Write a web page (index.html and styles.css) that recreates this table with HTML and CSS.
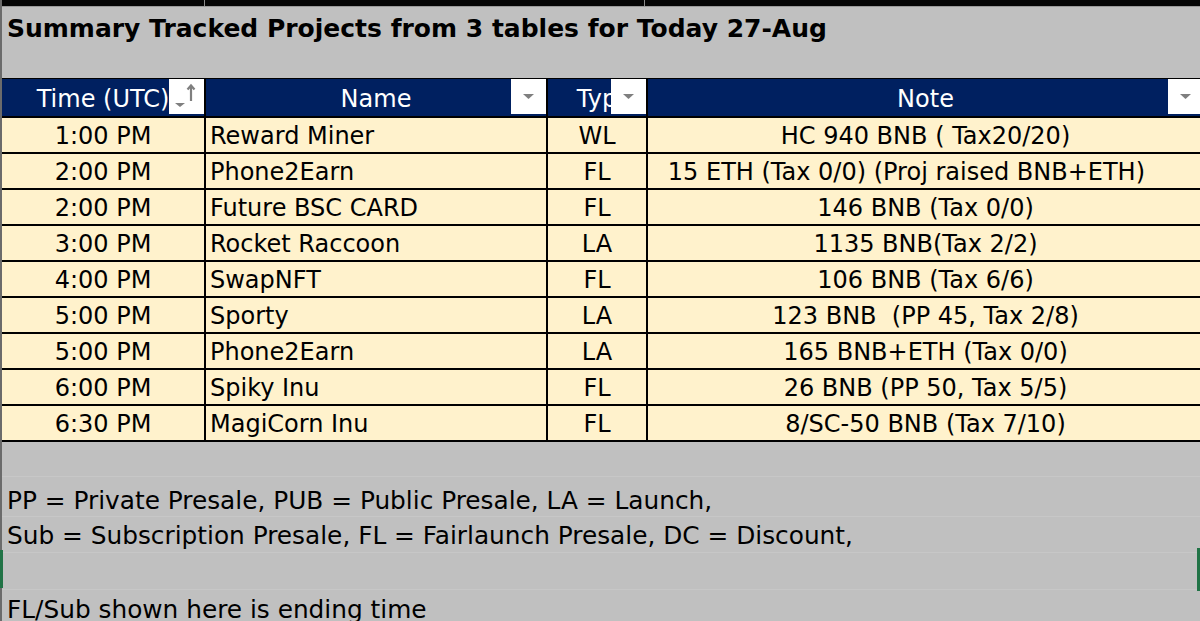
FILE: index.html
```html
<!DOCTYPE html>
<html>
<head>
<meta charset="utf-8">
<link rel="stylesheet" href="styles.css">
</head>
<body>
<div class="frame">
  <div class="topbar"><span class="tb-cell tb-a"></span><span class="tb-cell tb-b"></span><span class="tb-cell tb-c"></span></div>
  <div class="title">Summary Tracked Projects from 3 tables for Today 27-Aug</div>
  <table class="sheet">
    <colgroup>
      <col class="w-time"><col class="w-name"><col class="w-type"><col class="w-note">
    </colgroup>
    <thead>
      <tr>
        <th class="hc">Time (UTC)<span class="filter sort"><svg width="35" height="35" viewBox="0 0 35 35"><path d="M6 24h10l-5 4z" fill="#7f7f7f"/><path d="M22 22V7M18.5 10.5L22 6.5l3.5 4" stroke="#7f7f7f" stroke-width="2.2" fill="none"/></svg></span></th>
        <th class="hc">Name<span class="filter"><svg width="35" height="35" viewBox="0 0 35 35"><path d="M12 15h11l-5.5 5z" fill="#7f7f7f"/></svg></span></th>
        <th class="hc">Typ<span class="filter"><svg width="35" height="35" viewBox="0 0 35 35"><path d="M12 15h11l-5.5 5z" fill="#7f7f7f"/></svg></span></th>
        <th class="hc">Note<span class="filter"><svg width="35" height="35" viewBox="0 0 35 35"><path d="M12 15h11l-5.5 5z" fill="#7f7f7f"/></svg></span></th>
      </tr>
    </thead>
    <tbody>
      <tr><td class="ctr">1:00 PM</td><td>Reward Miner</td><td class="ctr">WL</td><td class="ctr">HC 940 BNB ( Tax20/20)</td></tr>
      <tr><td class="ctr">2:00 PM</td><td>Phone2Earn</td><td class="ctr">FL</td><td class="ctr">15 ETH (Tax 0/0) (Proj raised BNB+ETH)&nbsp;&nbsp;&nbsp;&nbsp;&nbsp;</td></tr>
      <tr><td class="ctr">2:00 PM</td><td>Future BSC CARD</td><td class="ctr">FL</td><td class="ctr">146 BNB (Tax 0/0)</td></tr>
      <tr><td class="ctr">3:00 PM</td><td>Rocket Raccoon</td><td class="ctr">LA</td><td class="ctr">1135 BNB(Tax 2/2)</td></tr>
      <tr><td class="ctr">4:00 PM</td><td>SwapNFT</td><td class="ctr">FL</td><td class="ctr">106 BNB (Tax 6/6)</td></tr>
      <tr><td class="ctr">5:00 PM</td><td>Sporty</td><td class="ctr">LA</td><td class="ctr">123 BNB&nbsp; (PP 45, Tax 2/8)</td></tr>
      <tr><td class="ctr">5:00 PM</td><td>Phone2Earn</td><td class="ctr">LA</td><td class="ctr">165 BNB+ETH (Tax 0/0)</td></tr>
      <tr><td class="ctr">6:00 PM</td><td>Spiky Inu</td><td class="ctr">FL</td><td class="ctr">26 BNB (PP 50, Tax 5/5)</td></tr>
      <tr><td class="ctr">6:30 PM</td><td>MagiCorn Inu</td><td class="ctr">FL</td><td class="ctr">8/SC-50 BNB (Tax 7/10)</td></tr>
    </tbody>
  </table>
  <div class="notes">
    <div class="nrow r-empty"></div>
    <div class="nrow r-pp">PP = Private Presale, PUB = Public Presale, LA = Launch,</div>
    <div class="nrow r-sub">Sub = Subscription Presale, FL = Fairlaunch Presale, DC = Discount,</div>
    <div class="nrow r-empty2"></div>
    <div class="nrow r-fl">FL/Sub shown here is ending time</div>
  </div>
  <span class="sel sel-left"></span>
  <span class="sel sel-right"></span>
</div>
</body>
</html>
```
FILE: styles.css
```css
* { box-sizing: border-box; }
html, body { margin: 0; padding: 0; }
body {
  width: 1200px;
  height: 621px;
  overflow: hidden;
  background: #c0c0c0;
  font-family: "DejaVu Sans", sans-serif;
  font-size: 24px;
  color: #000;
}
.frame {
  position: relative;
  width: 1200px;
  height: 621px;
  border-left: 2px solid #6b6b6b;
}
.topbar {
  display: flex;
  height: 7px;
  background: #050505;
  border-bottom: 1px solid #9a9a9a;
}
.tb-cell { display: block; height: 6px; border-right: 1px solid #8a8a8a; }
.tb-a { width: 203px; }
.tb-b { width: 440px; }
.tb-c { flex: 1; border-right: none; }
.title {
  height: 71px;
  padding: 7px 0 0 5px;
  font-weight: bold;
  font-size: 25px;
  line-height: 30px;
}
.sheet {
  border-collapse: collapse;
  table-layout: fixed;
  width: 1202px;
}
.w-time { width: 203px; }
.w-name { width: 342px; }
.w-type { width: 100px; }
.w-note { width: 557px; }
.sheet th, .sheet td {
  border: 2px solid #000;
  padding: 0 4px;
  white-space: nowrap;
  overflow: hidden;
}
.sheet tr > :first-child { border-left: none; }
.sheet th {
  position: relative;
  height: 38px;
  background: #002060;
  color: #fff;
  font-weight: normal;
  text-align: center;
  padding-top: 3px;
  border-top: 1px solid #000;
  line-height: 30px;
}
.sheet td {
  height: 36px;
  background: #fff2cc;
  line-height: 30px;
  padding-top: 3px;
}
.sheet td.ctr { text-align: center; }
.filter {
  position: absolute;
  top: 0;
  right: 0;
  width: 35px;
  height: 35px;
  background: #fff;
  display: block;
}
.filter svg { display: block; }
.notes { font-size: 24.8px; }
.nrow {
  padding-left: 5px;
  line-height: 30px;
  border-bottom: 1px solid #c7c7c7;
  white-space: nowrap;
}
.r-empty { height: 35px; }
.r-pp { height: 40px; padding-top: 9px; }
.r-sub { height: 36px; padding-top: 4px; }
.r-empty2 { height: 37px; }
.r-fl { height: 37px; padding-top: 5px; }
.sel {
  position: absolute;
  width: 3px;
  background: #217346;
}
.sel-left { left: -2px; top: 550px; height: 38px; }
.sel-right { right: 0; top: 548px; height: 43px; }
```
